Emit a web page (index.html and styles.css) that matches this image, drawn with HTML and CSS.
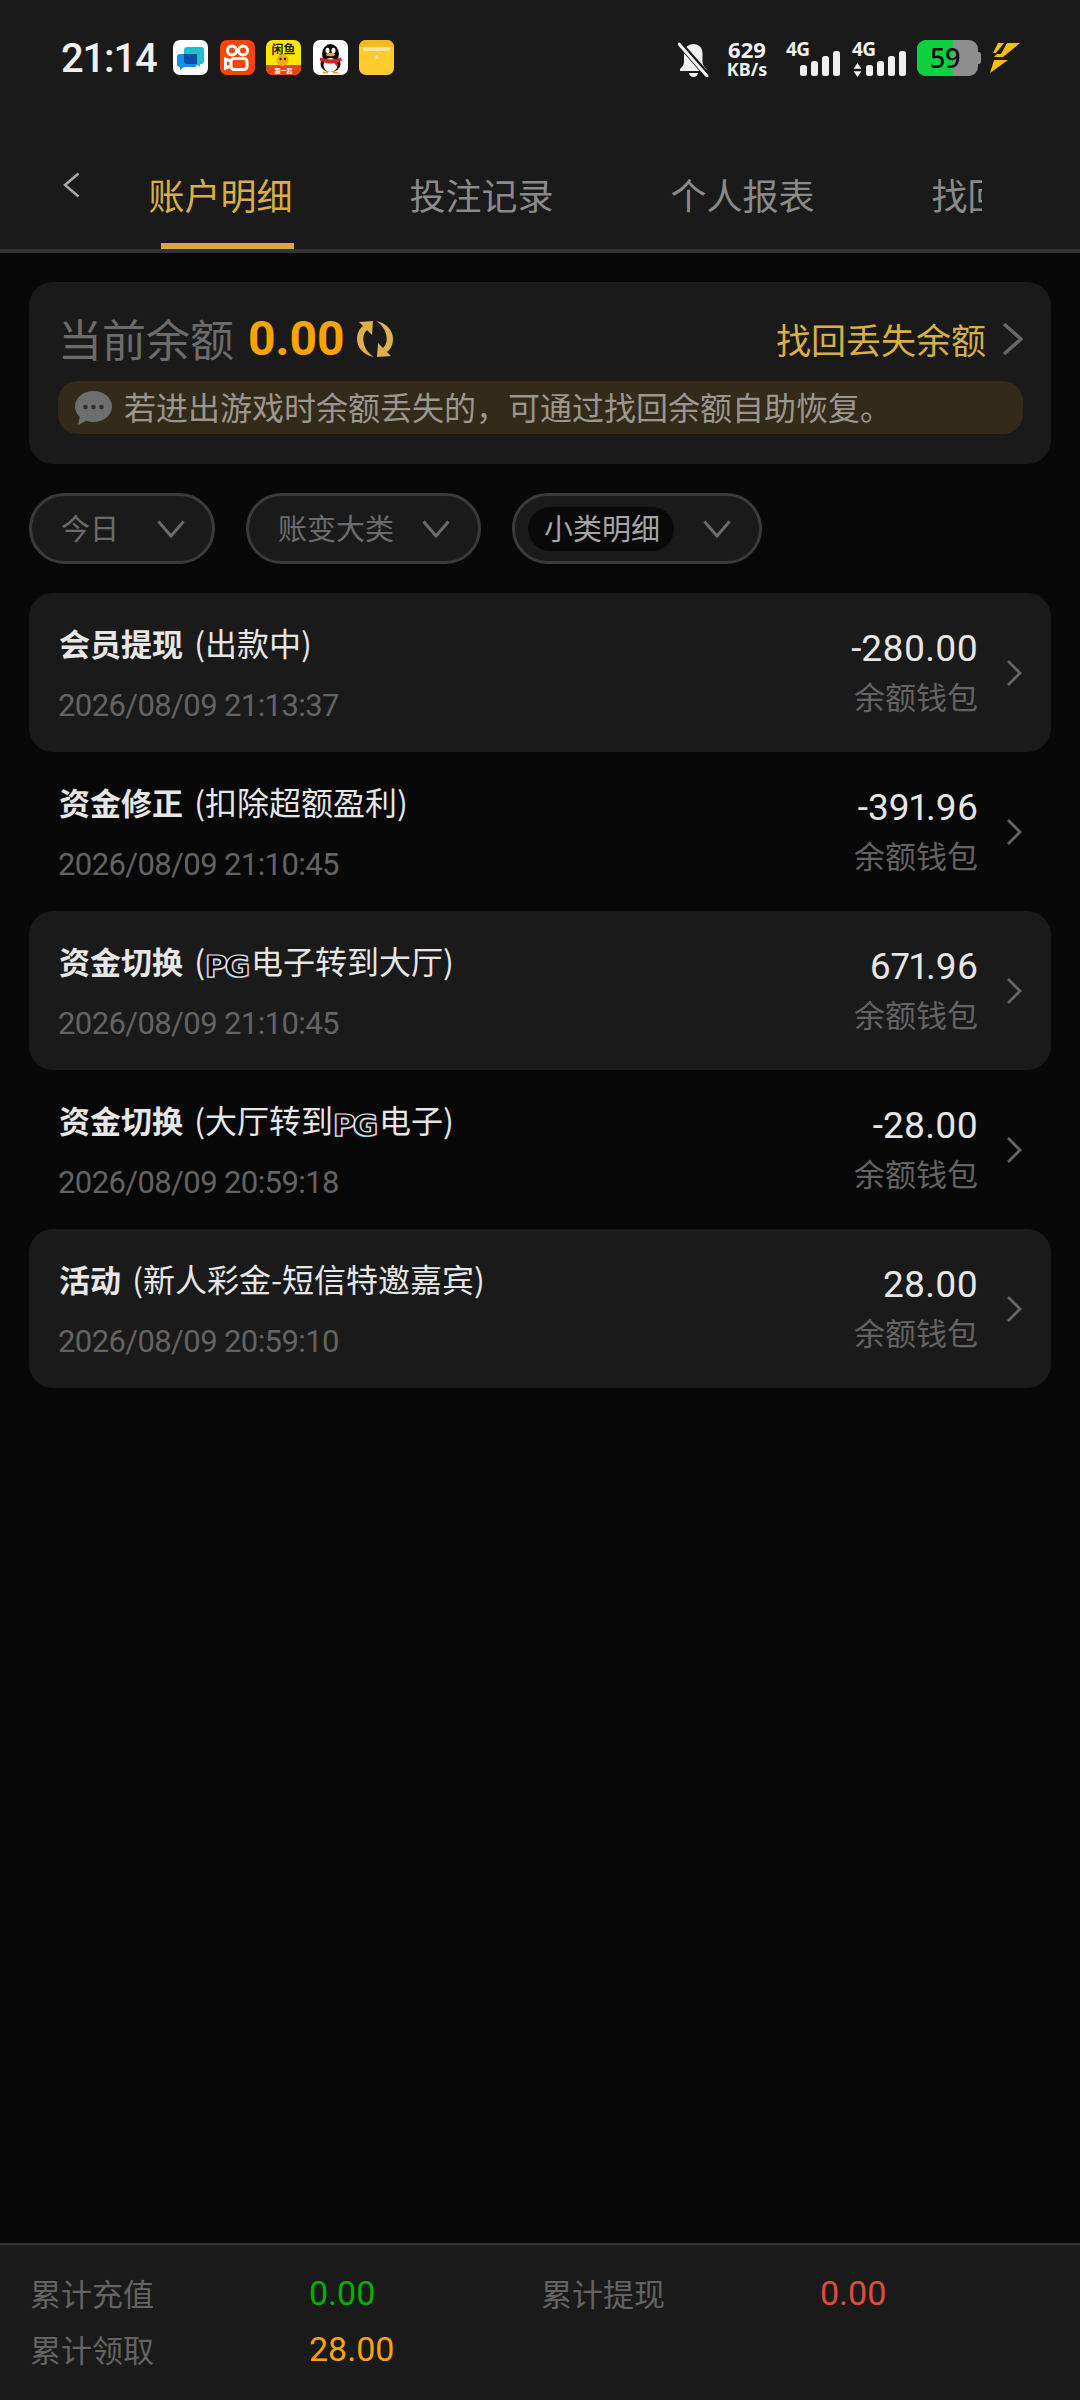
FILE: index.html
```html
<!DOCTYPE html>
<html lang="zh">
<head>
<meta charset="utf-8">
<title>账户明细</title>
<link rel="stylesheet" href="styles.css">
</head>
<body>
<div class="app">
  <header class="top">
    <div class="status">
      <span class="time">21:14</span>
      <div class="apps">
        <svg class="app-ic" viewBox="0 0 35 35"><rect width="35" height="35" rx="7" fill="#fff"/><path d="M14 7h14a3 3 0 0 1 3 3v11a3 3 0 0 1-3 3h-1v3l-4-3h-9a3 3 0 0 1-3-3V10a3 3 0 0 1 3-3z" fill="#23bdd0"/><path d="M7 14h14a3 3 0 0 1 3 3v7a3 3 0 0 1-3 3H11l-4 3v-3a3 3 0 0 1-3-3v-7a3 3 0 0 1 3-3z" fill="#1a8cf0"/><path d="M11 14h13v10H14a3 3 0 0 1-3-3z" fill="#0d4fa8"/></svg>
        <svg class="app-ic" viewBox="0 0 35 35"><rect width="35" height="35" rx="7" fill="#f8450c"/><g fill="none" stroke="#fff" stroke-width="3"><circle cx="12" cy="10.5" r="4.5"/><circle cx="23" cy="10.5" r="4.5"/><rect x="11" y="18.5" width="16" height="11" rx="3"/><path d="M10.500 21 5.500 19v9l5-2"/></g></svg>
        <svg class="app-ic" viewBox="0 0 35 35"><rect width="35" height="35" rx="7" fill="#ffe600"/><path d="M0 25h35v3a7 7 0 0 1-7 7H7a7 7 0 0 1-7-7z" fill="#e8431a"/><text class="ic-big" x="17.500" y="14" text-anchor="middle">闲鱼</text><circle cx="16.500" cy="20" r="6" fill="#f7a90d"/><circle cx="14.500" cy="19" r="1.200" fill="#222"/><circle cx="19" cy="19" r="1.200" fill="#222"/><text class="ic-small" x="17.500" y="33" text-anchor="middle">跟一起</text></svg>
        <svg class="app-ic" viewBox="0 0 35 35"><rect width="35" height="35" rx="7" fill="#fff"/><ellipse cx="17.500" cy="14" rx="8.500" ry="10" fill="#0a0a0a"/><ellipse cx="17.500" cy="24" rx="10" ry="8" fill="#0a0a0a"/><ellipse cx="17.500" cy="25" rx="7" ry="7" fill="#fff"/><ellipse cx="14.500" cy="10.500" rx="2" ry="2.800" fill="#fff"/><ellipse cx="20.500" cy="10.500" rx="2" ry="2.800" fill="#fff"/><ellipse cx="17.500" cy="14.500" rx="4.500" ry="1.800" fill="#f6a81c"/><path d="M7 17.500q10.500 4 21 0l1 3-5 2v4l-3-3.500q-4 1-8 0l-6-2.500z" fill="#e02020"/><path d="M10 32h5v1.500h-6zM20 32h5l1 1.500h-6z" fill="#f6a81c"/></svg>
        <svg class="app-ic" viewBox="0 0 35 35"><rect width="35" height="35" rx="7" fill="#fdcb2e"/><path d="M0 7a7 7 0 0 1 7-7h21a7 7 0 0 1 7 7z" fill="#f9b81e"/><rect x="4" y="7" width="27" height="4" rx="1.500" fill="#fde59a"/><circle cx="17.500" cy="17" r="1.700" fill="#fff1c4"/></svg>
      </div>
      <div class="sys">
        <svg class="bell" viewBox="0 0 31 35"><path d="M15.500 2c5 0 9 3.500 9 9v9c0 3 2 5 4 7v2H2v-2c2-2 4-4 4-7v-9c0-5.500 4.500-9 9.500-9z" fill="#f0f0f0"/><path d="M11 31h9a4.500 4 0 0 1-9 0z" fill="#f0f0f0"/><path d="M1 1l29 33" stroke="#1a1a1a" stroke-width="6"/><path d="M1 2l28 32" stroke="#f0f0f0" stroke-width="3" stroke-linecap="round"/></svg>
        <div class="speed"><b>629</b><b class="kb">KB/s</b></div>
        <div class="net">
          <b class="g4">4G</b>
          <div class="bars"><i class="b1"></i><i class="b2"></i><i class="b3"></i><i class="b4"></i></div>
        </div>
        <div class="net net2">
          <b class="g4">4G</b>
          <svg class="updown" viewBox="0 0 10 16"><path d="M5 0l4.500 6.500H.5zM5 16 .5 9.500h9z" fill="#f0f0f0"/></svg>
          <div class="bars"><i class="b1"></i><i class="b2"></i><i class="b3"></i><i class="b4"></i></div>
        </div>
        <div class="batt"><span class="fill"></span><span class="pct">59</span></div>
        <svg class="bolt" viewBox="0 0 30 30"><path d="M8 0h6L6 10H3zM17 0h13L13 14H4l3-3h4zM4 17h14L0 30z" fill="#f6c009"/></svg>
      </div>
    </div>
    <nav class="tabs">
      <svg class="back" viewBox="0 0 17 26"><path d="M15.500 1.500 2 13l13.500 11.500" fill="none" stroke="#a8a8a8" stroke-width="2.600"/></svg>
      <div class="tabs-scroll">
        <a class="tab on">账户明细</a>
        <a class="tab">投注记录</a>
        <a class="tab">个人报表</a>
        <a class="tab">找回余额</a>
      </div>
    </nav>
  </header>

  <main class="main">
    <section class="bal card">
      <div class="bal-top">
        <span class="bal-l">当前余额</span>
        <span class="bal-v">0.00</span>
        <svg class="refresh" viewBox="0 0 38 38"><g fill="#dcb04a"><path d="M18 37C7 35 1 27 1 19 1 14 3 9 7 6L3 2l14-1-1 14-5-5c-3 3-4 6-3.500 11 .5 6 4 12 10.500 16z"/><path d="M20 1c11 2 17 10 17 18 0 5-2 10-6 13l4 4-14 1 1-14 5 5c3-3 4-6 3.500-11C30 11 26.500 5 20 1z"/></g></svg>
        <a class="find">找回丢失余额</a>
        <svg class="find-ar" viewBox="0 0 21 34"><path d="M2 2l17 15L2 32" fill="none" stroke="#666" stroke-width="3.500"/></svg>
      </div>
      <div class="notice">
        <svg class="bubble" viewBox="0 0 37 34"><path d="M18.500 0C28.700 0 37 6.800 37 15.500S28.700 31 18.500 31c-2.500 0-5-.4-7-1.200L3 34l1.800-8C2 23 0 19.500 0 15.500 0 6.800 8.300 0 18.500 0z" fill="#6e6e6e"/><circle cx="10.500" cy="16" r="2.300" fill="#2e2e2e"/><circle cx="18.500" cy="16" r="2.300" fill="#2e2e2e"/><circle cx="26.500" cy="16" r="2.300" fill="#2e2e2e"/></svg>
        <span>若进出游戏时余额丢失的，可通过找回余额自助恢复。</span>
      </div>
    </section>

    <div class="filters">
      <button class="pill p1"><span class="pt">今日</span><svg class="dn" viewBox="0 0 28 18"><path d="M1.500 1.500 14 16 26.500 1.500" fill="none" stroke="#6b6b6b" stroke-width="3"/></svg></button>
      <button class="pill p2"><span class="pt">账变大类</span><svg class="dn" viewBox="0 0 28 18"><path d="M1.500 1.500 14 16 26.500 1.500" fill="none" stroke="#6b6b6b" stroke-width="3"/></svg></button>
      <button class="pill p3"><span class="pt chip">小类明细</span><svg class="dn" viewBox="0 0 28 18"><path d="M1.500 1.500 14 16 26.500 1.500" fill="none" stroke="#6b6b6b" stroke-width="3"/></svg></button>
    </div>

    <div class="list">
      <div class="row alt">
        <div class="r-main"><div class="r-t"><b>会员提现</b> (出款中)</div><div class="r-d">2026/08/09 21:13:37</div></div>
        <div class="r-side"><div class="r-a">-280.00</div><div class="r-w">余额钱包</div></div>
        <svg class="r-ar" viewBox="0 0 16 28"><path d="M2 2l12 12L2 26" fill="none" stroke="#666" stroke-width="2.800"/></svg>
      </div>
      <div class="row">
        <div class="r-main"><div class="r-t"><b>资金修正</b> (扣除超额盈利)</div><div class="r-d">2026/08/09 21:10:45</div></div>
        <div class="r-side"><div class="r-a">-391.96</div><div class="r-w">余额钱包</div></div>
        <svg class="r-ar" viewBox="0 0 16 28"><path d="M2 2l12 12L2 26" fill="none" stroke="#666" stroke-width="2.800"/></svg>
      </div>
      <div class="row alt">
        <div class="r-main"><div class="r-t"><b>资金切换</b> (<span class="pg">PG</span>电子转到大厅)</div><div class="r-d">2026/08/09 21:10:45</div></div>
        <div class="r-side"><div class="r-a">671.96</div><div class="r-w">余额钱包</div></div>
        <svg class="r-ar" viewBox="0 0 16 28"><path d="M2 2l12 12L2 26" fill="none" stroke="#666" stroke-width="2.800"/></svg>
      </div>
      <div class="row">
        <div class="r-main"><div class="r-t"><b>资金切换</b> (大厅转到<span class="pg">PG</span>电子)</div><div class="r-d">2026/08/09 20:59:18</div></div>
        <div class="r-side"><div class="r-a">-28.00</div><div class="r-w">余额钱包</div></div>
        <svg class="r-ar" viewBox="0 0 16 28"><path d="M2 2l12 12L2 26" fill="none" stroke="#666" stroke-width="2.800"/></svg>
      </div>
      <div class="row alt">
        <div class="r-main"><div class="r-t"><b>活动</b> (新人彩金-短信特邀嘉宾)</div><div class="r-d">2026/08/09 20:59:10</div></div>
        <div class="r-side"><div class="r-a">28.00</div><div class="r-w">余额钱包</div></div>
        <svg class="r-ar" viewBox="0 0 16 28"><path d="M2 2l12 12L2 26" fill="none" stroke="#666" stroke-width="2.800"/></svg>
      </div>
    </div>
  </main>

  <footer class="foot">
    <span class="f-l">累计充值</span><span class="f-v green">0.00</span>
    <span class="f-l">累计提现</span><span class="f-v red">0.00</span>
    <span class="f-l">累计领取</span><span class="f-v orange">28.00</span>
  </footer>
</div>
</body>
</html>
```

FILE: styles.css
```css
* { box-sizing: border-box; }
html, body { margin: 0; padding: 0; }
body {
  width: 1080px;
  height: 2400px;
  overflow: hidden;
  background: #080808;
  font-family: Roboto, "Noto Sans CJK SC", sans-serif;
}
.app { width: 1080px; height: 2400px; display: flex; flex-direction: column; }

/* header */
.top { height: 253px; background: #1a1a1a; border-bottom: 4px solid #333; display: flex; flex-direction: column; }
.status { height: 117px; padding: 40px 0 0 61px; display: flex; align-items: flex-start; position: relative; }
.time { width: 112px; font-size: 40px; line-height: 36px; font-weight: 500; color: #f0f0f0; letter-spacing: -1.200px; margin-top: 1px; }
.apps { display: flex; gap: 11.500px; }
.app-ic { width: 35px; height: 35px; display: block; }
.ic-big { font: 700 12px "Noto Sans CJK SC", sans-serif; fill: #222; }
.ic-small { font: 700 6px "Noto Sans CJK SC", sans-serif; fill: #fff; }
.sys { position: absolute; left: 678px; top: 40px; display: flex; align-items: flex-start; }
.bell { width: 31px; height: 35px; margin-top: 2px; }
.speed { width: 42px; margin-left: 17px; display: flex; flex-direction: column; align-items: center; color: #f0f0f0; }
.speed b { font: 700 22px/19px "Noto Sans", sans-serif; }
.speed .kb { font-size: 18px; line-height: 20px; }
.net { position: relative; width: 54px; height: 37px; margin-left: 18px; }
.net2 { width: 54px; margin-left: 12px; }
.g4 { position: absolute; left: 0; top: 0; font: 700 19px/19px "Noto Sans", sans-serif; color: #f0f0f0; letter-spacing: -.5px; }
.bars { position: absolute; right: 0; bottom: 1px; display: flex; align-items: flex-end; gap: 4px; }
.bars i { display: block; width: 7px; background: #f0f0f0; border-radius: 2.500px; }
.bars .b1 { height: 11px; }
.bars .b2 { height: 15px; }
.bars .b3 { height: 20px; }
.bars .b4 { height: 25px; }
.updown { position: absolute; left: 1px; top: 23px; width: 9px; height: 14px; }
.batt { position: relative; width: 61px; height: 36px; margin-left: 11px; background: #8e8e8e; border-radius: 9px; }
.batt::after { content: ""; position: absolute; right: -3px; top: 12px; width: 3px; height: 12px; background: #8e8e8e; border-radius: 0 2px 2px 0; }
.fill { position: absolute; left: 0; top: 0; bottom: 0; width: 36px; background: #0fd13f; border-radius: 9px 0 0 9px; }
.pct { position: absolute; inset: 0; padding-left: 13px; font: 500 27px/36px "Noto Sans", sans-serif; color: #0a0a0a; letter-spacing: -.5px; }
.bolt { width: 30px; height: 30px; margin: 3px 0 0 12px; }

/* tabs */
.tabs { flex: 1; position: relative; }
.back { position: absolute; left: 63px; top: 55px; width: 17px; height: 26px; }
.tabs-scroll { position: absolute; left: 90px; right: 98px; top: 0; bottom: 0; display: flex; overflow: hidden; }
.tab { flex: 0 0 261px; height: 132px; padding-top: 53px; text-align: center; font-size: 36px; line-height: 48px; color: #8a8a8a; position: relative; white-space: nowrap; font-family: "Noto Sans CJK SC", sans-serif; }
.tab.on { color: #d9ae44; }
.tab.on::after { content: ""; position: absolute; left: 71px; bottom: 0; width: 133px; height: 6px; background: #d4a843; }

/* main */
.main { flex: 1; padding: 29px 29px 0; }
.card { background: #1a1a1a; border-radius: 24px; }
.bal { height: 182px; padding: 35px 28px 0 29px; }
.bal-top { display: flex; align-items: center; height: 44px; margin-bottom: 20px; }
.bal-l { height: 44px; font: 400 44px/42px "Noto Sans CJK SC", sans-serif; color: #6b6b6b; width: 190px; white-space: nowrap; }
.bal-v { font: 700 48px/44px Roboto, sans-serif; color: #f7a400; width: 108px; }
.refresh { width: 38px; height: 38px; }
.find { margin-left: auto; font: 400 35px/44px "Noto Sans CJK SC", sans-serif; color: #d9ae44; white-space: nowrap; }
.find-ar { width: 21px; height: 34px; margin-left: 16px; }
.notice { height: 53px; background: #332a1a; border-radius: 20px; display: flex; align-items: center; padding-left: 17px; }
.bubble { width: 37px; height: 34px; margin-right: 12px; flex: none; }
.notice span { height: 53px; font: 400 32px/51px "Noto Sans CJK SC", sans-serif; color: #9a9690; white-space: nowrap; }

/* filters */
.filters { display: flex; gap: 31px; margin-top: 29px; }
.pill { height: 71px; padding: 0; background: #1a1a1a; border: 3px solid #3a3a3a; border-radius: 36px; display: flex; align-items: center; font-family: inherit; }
.pt { font: 400 29px/41px "Noto Sans CJK SC", sans-serif; height: 44px; color: #6b6b6b; white-space: nowrap; }
.p1 { width: 186px; padding-left: 29px; }
.p2 { width: 235px; padding-left: 29px; }
.p3 { width: 250px; padding-left: 13px; }
.dn { width: 28px; height: 18px; flex: none; margin-left: auto; }
.p1 .dn { margin-right: 27px; }
.p2 .dn { margin-right: 28px; }
.p3 .dn { margin-right: 28px; }
.chip { background: #090909; color: #a6a6a6; border-radius: 22px; padding: 0 14px 0 16px; }

/* list */
.list { margin-top: 29px; display: flex; flex-direction: column; }
.row { height: 159px; border-radius: 24px; display: flex; align-items: stretch; padding: 0 29px 0 30px; }
.row.alt { background: #1a1a1a; }
.r-main { flex: 1; min-width: 0; padding-top: 27px; }
.r-t { height: 44px; font: 400 32px/44px "Noto Sans CJK SC", sans-serif; color: #e6e6e6; white-space: nowrap; }
.r-t b { font-weight: 700; font-size: 31px; margin-right: 4px; }
.r-d { margin: 24px 0 0 -1px; font: 400 31px/36px Roboto, sans-serif; letter-spacing: -.6px; color: #636363; white-space: nowrap; }
.r-side { text-align: right; padding-top: 34px; margin-right: 28px; }
.r-a { font: 400 37px/44px Roboto, sans-serif; font-variant-numeric: proportional-nums; color: #e6e6e6; }
.r-w { margin-top: 5px; font: 400 31px/40px "Noto Sans CJK SC", sans-serif; color: #636363; }
.r-ar { width: 16px; height: 28px; align-self: center; }
.pg { display: inline-block; width: 46px; height: 30px; font: 900 31px/30px "DejaVu Sans", sans-serif; color: #050505; -webkit-text-stroke: 1.200px #e8e8e8; letter-spacing: -3px; vertical-align: -3px; text-shadow: -1px 1px 0 #29c4e0, 1px 1px 0 #e0508a; }

/* footer */
.foot { height: 157px; background: #1a1a1a; border-top: 2px solid #333; padding: 20px 0 0 30px; display: grid; grid-template-columns: 279px 232px 279px 1fr; grid-auto-rows: 56px; align-items: center; align-content: start; }
.f-l { font: 400 31px/44px "Noto Sans CJK SC", sans-serif; color: #636363; }
.f-v { font: 400 34px/44px Roboto, sans-serif; }
.green { color: #00b000; }
.red { color: #e04a3f; }
.orange { color: #f7a400; }
```
